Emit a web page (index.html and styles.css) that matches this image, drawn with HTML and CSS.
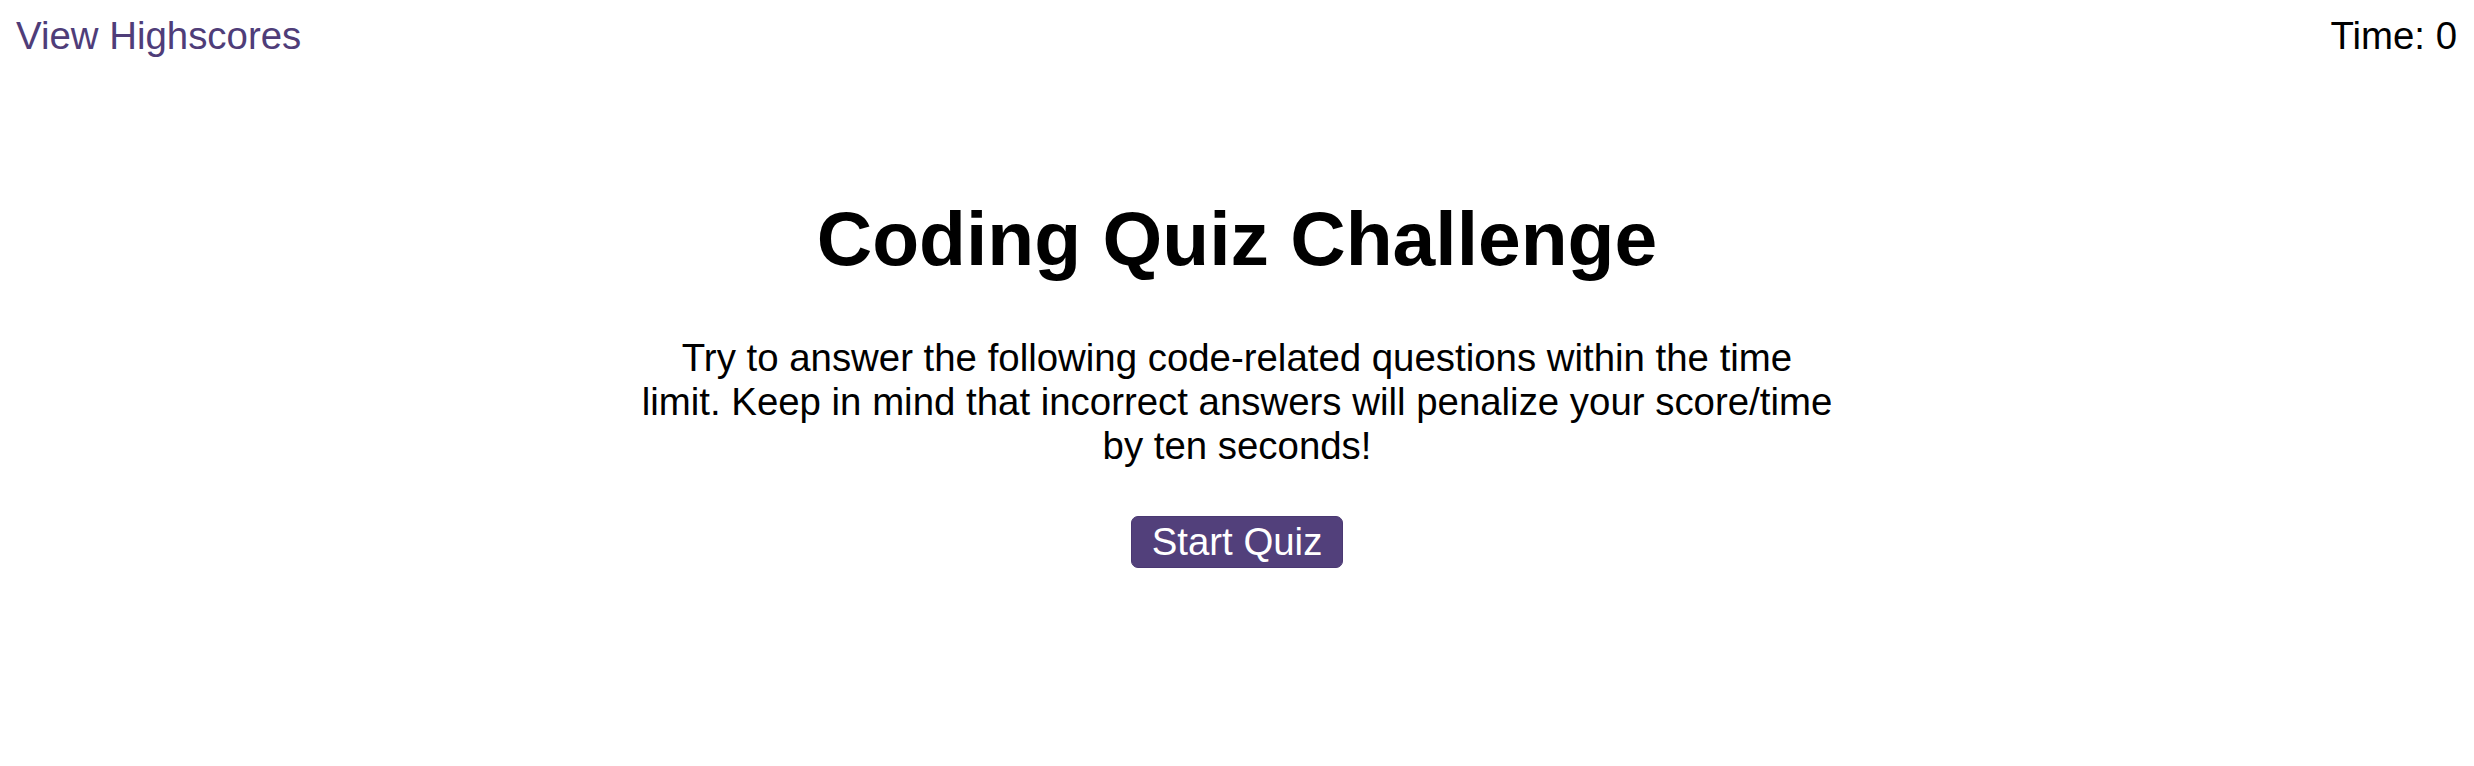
FILE: index.html
```html
<!DOCTYPE html>
<html lang="en">
<head>
<meta charset="utf-8">
<title>Coding Quiz Challenge</title>
<link rel="stylesheet" href="styles.css">
</head>
<body>
<header class="top-bar">
  <a class="highscores-link" href="#">View Highscores</a>
  <div class="timer">Time: <span class="timer-value">0</span></div>
</header>
<main class="intro">
  <h1 class="intro-title">Coding Quiz Challenge</h1>
  <p class="intro-text">Try to answer the following code-related questions within the time limit. Keep in mind that incorrect answers will penalize your score/time by ten seconds!</p>
  <button class="start-button" type="button">Start Quiz</button>
</main>
</body>
</html>
```

FILE: styles.css
```css
html, body {
  margin: 0;
  padding: 0;
  background: #ffffff;
}

body {
  font-family: "Liberation Sans", Arial, sans-serif;
  color: #000000;
  font-size: 38.4px;
  line-height: normal;
}

.top-bar {
  display: flex;
  justify-content: space-between;
  align-items: flex-start;
  padding: 14px 17px 0 16px;
}

.highscores-link {
  color: #4f3d79;
  text-decoration: none;
}

.timer {
  color: #000000;
}

.intro {
  display: flex;
  flex-direction: column;
  align-items: center;
  text-align: center;
  padding-top: 136px;
}

.intro-title {
  margin: 0;
  font-size: 76.8px;
  font-weight: 700;
  line-height: normal;
}

.intro-text {
  margin: 53px 0 0;
  width: 1193px;
  font-size: 38.4px;
}

.start-button {
  margin-top: 48px;
  font-family: "Liberation Sans", Arial, sans-serif;
  font-size: 38.4px;
  line-height: normal;
  color: #ffffff;
  background: #52407b;
  border: 1px solid #4a3872;
  border-radius: 7px;
  padding: 3px 20px;
  cursor: pointer;
}
```
